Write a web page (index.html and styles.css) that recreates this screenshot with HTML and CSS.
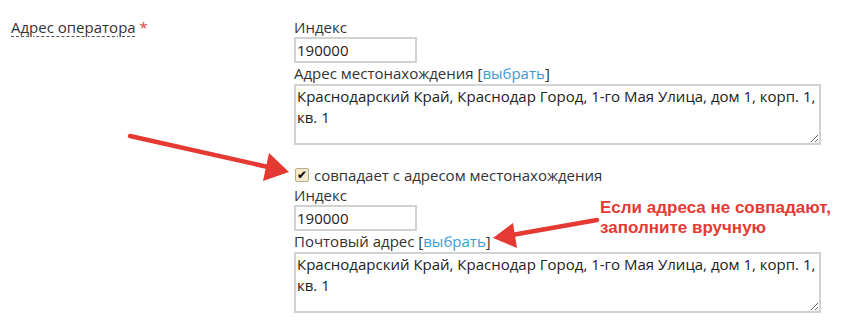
FILE: index.html
```html
<!DOCTYPE html>
<html lang="ru">
<head>
<meta charset="utf-8">
<title>Адрес оператора</title>
<link rel="stylesheet" href="styles.css">
</head>
<body>
<div class="page">
  <div class="form-row">
    <div class="label-col">
      <span class="field-label">Адрес оператора</span> <span class="req">*</span>
    </div>
    <div class="field-col">
      <div class="sub-label">Индекс</div>
      <input class="index-input" type="text" value="190000">
      <div class="sub-label addr">Адрес местонахождения [<a class="pick" href="#">выбрать</a>]</div>
      <textarea class="addr-area">Краснодарский Край, Краснодар Город, 1-го Мая Улица, дом 1, корп. 1, кв. 1</textarea>
      <label class="same-row"><span class="checkbox">&#10004;</span>совпадает с адресом местонахождения</label>
      <div class="sub-label">Индекс</div>
      <input class="index-input" type="text" value="190000">
      <div class="sub-label addr">Почтовый адрес [<a class="pick" href="#">выбрать</a>]</div>
      <textarea class="addr-area">Краснодарский Край, Краснодар Город, 1-го Мая Улица, дом 1, корп. 1, кв. 1</textarea>
    </div>
  </div>
  <div class="note">Если адреса не совпадают,<br>заполните вручную</div>
  <svg class="arrows" width="844" height="323" viewBox="0 0 844 323">
    <line x1="130" y1="136" x2="268" y2="167" stroke="#e53a33" stroke-width="4.5" stroke-linecap="round"/>
    <polygon points="289,172 269,153 263,181" fill="#e53a33"/>
    <line x1="597" y1="220" x2="512" y2="235" stroke="#e53a33" stroke-width="4.5" stroke-linecap="round"/>
    <polygon points="493,238 513,223 517,248" fill="#e53a33"/>
  </svg>
</div>
</body>
</html>
```
FILE: styles.css
```css
html, body {
  margin: 0;
  padding: 0;
  background: #ffffff;
}
.page {
  position: relative;
  width: 844px;
  height: 323px;
  overflow: hidden;
  font-family: "Open Sans", "Noto Sans", sans-serif;
  font-size: 15px;
  color: #333333;
}
.form-row {
  display: flex;
  padding-top: 18px;
}
.label-col {
  width: 283px;
  padding-left: 11px;
  line-height: 19px;
}
.field-label {
  text-decoration: underline dashed #555555;
  text-decoration-thickness: 1px;
  text-underline-offset: 3px;
}
.req {
  color: #e8413a;
}
.field-col {
  display: flex;
  flex-direction: column;
  align-items: flex-start;
}
.sub-label {
  line-height: 19px;
  height: 19px;
}
.sub-label.addr {
  line-height: 21px;
  height: 21px;
}
.pick {
  color: #3d9ad9;
  text-decoration: none;
}
.index-input {
  box-sizing: border-box;
  width: 123px;
  height: 26px;
  margin: 0;
  padding: 0 1px;
  border: 2px solid #d2d2d2;
  font-family: inherit;
  font-size: 15px;
  color: #222222;
  outline: none;
}
.addr-area {
  box-sizing: border-box;
  width: 527px;
  height: 61px;
  margin: 0;
  padding: 0 1px;
  border: 2px solid #d2d2d2;
  font-family: inherit;
  font-size: 15px;
  line-height: 21px;
  color: #222222;
  resize: both;
  outline: none;
}
.same-row {
  display: flex;
  align-items: center;
  gap: 5px;
  margin-top: 19px;
  height: 22px;
  line-height: 22px;
}
.checkbox {
  box-sizing: border-box;
  width: 14px;
  height: 14px;
  margin-left: 1px;
  border: 1px solid #b9ac8a;
  border-radius: 2px;
  background: #f5e9c8;
  color: #000000;
  font-size: 12px;
  font-weight: bold;
  line-height: 12px;
  text-align: center;
  font-family: "DejaVu Sans", sans-serif;
}
.note {
  position: absolute;
  left: 600px;
  top: 198px;
  font-family: "Liberation Sans", Arial, sans-serif;
  font-weight: bold;
  font-size: 17px;
  line-height: 20px;
  color: #e53a33;
}
.arrows {
  position: absolute;
  left: 0;
  top: 0;
  pointer-events: none;
}
```
